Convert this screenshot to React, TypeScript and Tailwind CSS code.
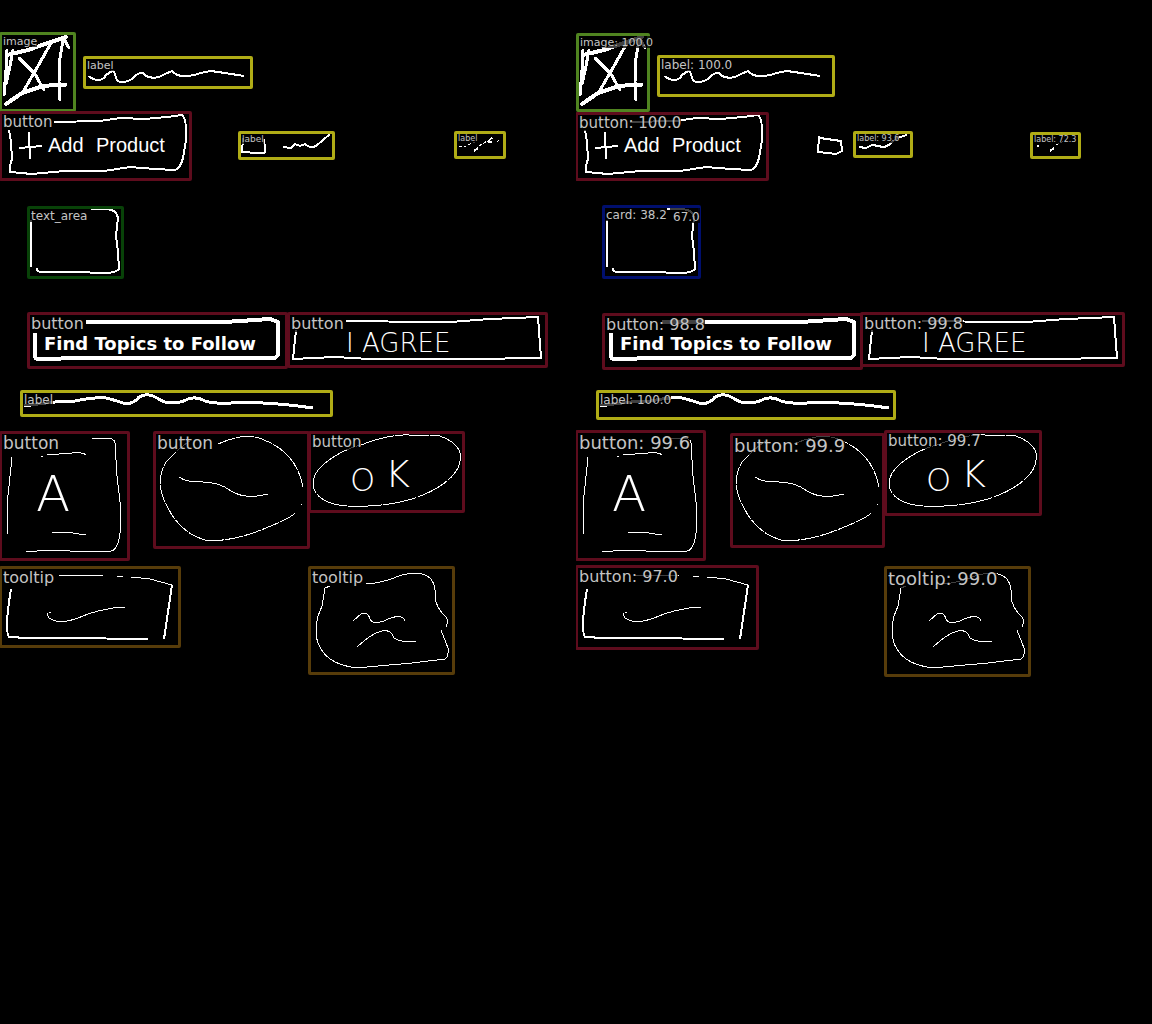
type Kind = "image" | "label" | "button" | "textArea" | "card" | "tooltip";

type Detection = {
  kind: Kind;
  caption: string;
  // left, top, right, bottom on the canvas
  box: [number, number, number, number];
  size: string;
};

const borderColor: Record<Kind, string> = {
  image: "border-[#508420]",
  label: "border-[#b0ac16]",
  button: "border-[#5e0c1d]",
  textArea: "border-[#084208]",
  card: "border-[#000f6e]",
  tooltip: "border-[#573c0a]",
};

const truth: Detection[] = [
  { kind: "image", caption: "image", box: [-1, 32, 76, 112], size: "text-[11px]" },
  { kind: "label", caption: "label", box: [83, 56, 253, 89], size: "text-[11px]" },
  { kind: "button", caption: "button", box: [-1, 111, 192, 181], size: "text-[15px]" },
  { kind: "label", caption: "label", box: [238, 131, 335, 160], size: "text-[9px]" },
  { kind: "label", caption: "label", box: [454, 131, 506, 159], size: "text-[8px]" },
  { kind: "textArea", caption: "text_area", box: [27, 206, 124, 279], size: "text-[12px]" },
  { kind: "button", caption: "button", box: [27, 312, 288, 369], size: "text-[16px]" },
  { kind: "button", caption: "button", box: [287, 312, 548, 368], size: "text-[16px]" },
  { kind: "label", caption: "label", box: [20, 390, 333, 417], size: "text-[12px]" },
  { kind: "button", caption: "button", box: [-1, 431, 130, 561], size: "text-[17px]" },
  { kind: "button", caption: "button", box: [153, 431, 310, 549], size: "text-[17px]" },
  { kind: "button", caption: "button", box: [308, 431, 465, 513], size: "text-[15px]" },
  { kind: "tooltip", caption: "tooltip", box: [-1, 566, 181, 648], size: "text-[16px]" },
  { kind: "tooltip", caption: "tooltip", box: [308, 566, 455, 675], size: "text-[16px]" },
];

const predicted: Detection[] = [
  { kind: "image", caption: "image: 100.0", box: [0, 33, 74, 112], size: "text-[11px]" },
  { kind: "label", caption: "label: 100.0", box: [81, 55, 259, 97], size: "text-[12px]" },
  { kind: "button", caption: "button: 100.0", box: [-1, 112, 193, 181], size: "text-[15px]" },
  { kind: "label", caption: "label: 93.6", box: [277, 131, 337, 158], size: "text-[8px]" },
  { kind: "label", caption: "label: 72.3", box: [454, 132, 505, 159], size: "text-[8px]" },
  { kind: "card", caption: "card: 38.2", box: [26, 205, 125, 279], size: "text-[12px]" },
  { kind: "button", caption: "button: 98.8", box: [26, 313, 287, 370], size: "text-[16px]" },
  { kind: "button", caption: "button: 99.8", box: [284, 312, 549, 367], size: "text-[16px]" },
  { kind: "label", caption: "label: 100.0", box: [20, 390, 320, 420], size: "text-[12px]" },
  { kind: "button", caption: "button: 99.6", box: [-1, 430, 130, 561], size: "text-[18px]" },
  { kind: "button", caption: "button: 99.9", box: [154, 433, 309, 548], size: "text-[18px]" },
  { kind: "button", caption: "button: 99.7", box: [308, 430, 466, 516], size: "text-[15px]" },
  { kind: "button", caption: "button: 97.0", box: [-1, 565, 183, 650], size: "text-[16px]" },
  { kind: "tooltip", caption: "tooltip: 99.0", box: [308, 566, 455, 677], size: "text-[18px]" },
];

function Sketch({ compactRow }: { compactRow: boolean }) {
  return (
    <svg
      width="576"
      height="700"
      viewBox="0 0 576 700"
      fill="none"
      stroke="#fff"
      shapeRendering="crispEdges"
      className="block shrink-0"
      role="img"
      aria-label="Hand-drawn wireframe"
    >
      {/* picture placeholder */}
      <g strokeWidth="4" strokeLinecap="round">
        <path d="M7 55L28 50L48 43L66 37" />
        <path d="M7 50L6 70L4 95M13 50L10 66L6 84" strokeWidth="3" />
        <path d="M51 43L38 66L23 92M19 58L35 74L44 90" strokeWidth="3" />
        <path d="M63 40L60 58L59 82L60 100M64 39L69 48" strokeWidth="3" />
        <path d="M6 104L22 93L40 87L52 85H65" />
      </g>
      {/* title line */}
      <path
        d="M89 76Q92 80 100 80Q104 79 106 75L112 71Q115 71 116 78Q118 83 124 82Q131 81 135 76Q142 70 145 75Q150 79 159 77Q167 73 172 71Q176 76 184 76Q194 76 200 73L211 71L225 73L244 76"
        strokeWidth="2"
      />
      {/* wide button outline */}
      <path
        d="M54 122L100 121L120 118L145 119L167 117L182 115Q187 119 186 140L183 158Q180 169 175 170L155 169L130 167L104 171H65L32 174L10 172Q9 167 12 159L11 142L9 130"
        strokeWidth="2"
      />
      <path d="M29 132L30 159M19 148L42 146" strokeWidth="2" />
      {/* small row */}
      {compactRow ? (
        <>
          <path d="M243 136L242 153M244 138L265 141L266 151L260 154L243 152" strokeWidth="2" />
          <path d="M283 147L290 148L296 145L303 146Q309 149 315 143L321 138L331 135" strokeWidth="2" />
          <path d="M474 151L478 148M461 146H463" strokeWidth="2" />
          <path d="M480 145L490 140" strokeWidth="1" strokeDasharray="3 2" />
        </>
      ) : (
        <>
          <path d="M243 138L242 153M243 152L256 153Q267 155 265 149L264 139" strokeWidth="2" />
          <path d="M283 147L291 148L295 144L300 146L305 144Q310 149 316 146L330 134" strokeWidth="2" />
          <path d="M474 151L478 148M488 142Q491 137 493 139M488 142H492" strokeWidth="2" />
          <path d="M459 146H466M479 146L487 141M497 142L500 139M468 145L475 142" strokeDasharray="3 2" />
        </>
      )}
      {/* text area outline */}
      <path d="M31 220V267M91 209H107Q117 210 118 218L116 236L118 252L119 269Q115 273 105 273L75 272H40Q36 271 37 268" strokeWidth="2" />
      {/* heavy button outline */}
      <path
        d="M35 333V356Q35 359 39 359L84 358H275L278 355V322L270 319L225 322H86"
        strokeWidth="4"
        strokeLinejoin="round"
      />
      {/* thin button outline */}
      <path d="M346 321L430 322H450L490 319L538 317L541 358H520L490 359H370L335 357L293 359L296 330" strokeWidth="2" />
      {/* caption line */}
      <path
        d="M24 406Q55 401 75 401Q93 397 106 398Q118 401 126 404Q135 403 139 397Q148 392 157 398Q164 403 171 403Q181 403 188 399Q197 396 205 401Q215 404 231 403Q246 401 263 403Q285 404 313 408"
        strokeWidth="3"
      />
      {/* square button */}
      <g strokeWidth="1">
        <path d="M12 457L9 486L7 504V534M92 438H107Q114 438 115 443L117 476L120 502V533Q118 550 111 551H70L49 550L26 552" />
        <path d="M41 456H43M47 455L72 453Q83 452 86 455M52 532H66L86 535" />
      </g>
      {/* round button */}
      <g strokeWidth="1">
        <path d="M218 444Q247 431 264 440Q295 452 302 483V487M301 504H302M295 513Q291 518 266 528Q230 543 205 540Q180 533 167 506Q154 482 166 462Q181 446 190 441" strokeDasharray="18 1" />
        <path d="M179 477Q186 482 198 482Q218 481 231 491Q246 500 268 494" />
      </g>
      {/* oval button */}
      <path d="M361 445Q389 434 409 435L440 436Q457 442 460 453Q463 470 443 484Q415 504 368 506Q322 509 314 489Q309 473 332 458Q345 449 361 445" strokeDasharray="34 1" />
      {/* first tooltip */}
      <path d="M11 589Q9 600 7 620Q7 636 9 637L28 638H64L148 639M172 585L168 612L164 639" strokeWidth="2" />
      <path d="M59 575H103M117 576H123M131 577L150 579L172 585" strokeWidth="1" />
      <path d="M51 613Q45 612 49 618Q59 625 78 618Q92 612 103 610Q114 607 125 607" strokeWidth="1" />
      {/* second tooltip */}
      <path d="M366 584Q383 583 399 576Q421 569 431 579Q436 585 436 602Q439 611 446 617Q449 621 446 627M441 630L448 648Q449 657 445 659L412 663L367 667H351Q329 663 321 649Q313 637 318 616L322 606L325 588L330 586" />
      <path d="M353 621L361 614Q368 611 370 619Q372 625 384 621Q402 612 405 621M357 647Q372 633 382 631Q391 629 394 638Q401 643 416 641" />
      {/* handwritten words */}
      <g fill="#fff" stroke="none" fontFamily="'DejaVu Sans', sans-serif">
        <g fontFamily="'Liberation Sans', sans-serif" fontSize="20">
          <text x="48" y="152">Add</text>
          <text x="96" y="152">Product</text>
        </g>
        <text x="44" y="350" fontSize="18" fontWeight="700">Find Topics to Follow</text>
        <g fontWeight="200">
          <text x="346" y="352" fontSize="26">I AGREE</text>
          <text x="350" y="491" fontSize="32">O</text>
          <text x="385" y="487" fontSize="38">K</text>
          <text x="36" y="511" fontSize="50">A</text>
        </g>
      </g>
    </svg>
  );
}

function DetectionBox({ kind, caption, box, size }: Detection) {
  const [left, top, right, bottom] = box;
  return (
    <div
      className={`absolute rounded-xs border-3 ${borderColor[kind]}`}
      style={{ left, top, width: right - left, height: bottom - top }}
    >
      <span className={`block w-max bg-black/75 pt-px pl-px leading-none whitespace-nowrap text-[#c4c4c4] ${size}`}>
        {caption}
      </span>
    </div>
  );
}

function Panel({ name, items, compactRow = false }: { name: string; items: Detection[]; compactRow?: boolean }) {
  return (
    <section aria-label={name} className="relative overflow-hidden">
      <Sketch compactRow={compactRow} />
      {items.map((item, i) => (
        <DetectionBox key={i} {...item} />
      ))}
      {compactRow && (
        <span className="absolute top-[208px] left-[94px] bg-black/75 pt-[3px] pl-[3px] text-[12px] leading-none text-[#c4c4c4]">
          67.0
        </span>
      )}
    </section>
  );
}

export default function App() {
  return (
    <main className="grid min-h-screen grid-cols-2 bg-black font-['DejaVu_Sans',sans-serif]">
      <Panel name="Annotated elements" items={truth} />
      <Panel name="Detected elements" items={predicted} compactRow />
    </main>
  );
}
